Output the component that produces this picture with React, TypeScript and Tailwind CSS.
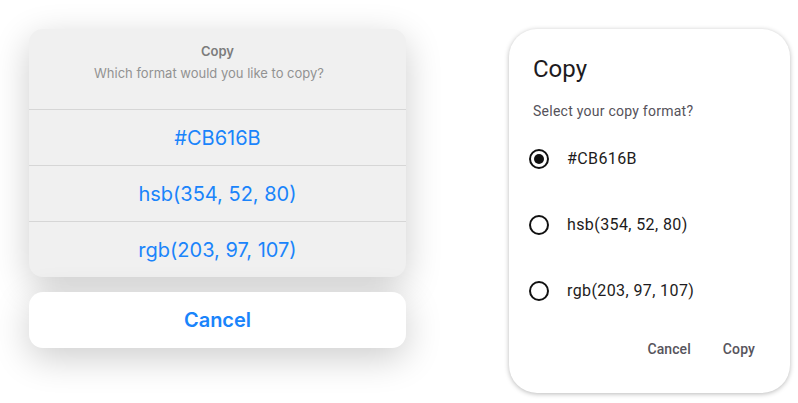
const formats = ['#CB616B', 'hsb(354, 52, 80)', 'rgb(203, 97, 107)']

function IosSheet() {
  return (
    <div className="flex w-[377px] flex-col gap-[15px] font-['Inter',sans-serif]">
      <div className="flex flex-col overflow-hidden rounded-[14px] bg-[#f0f0f0] shadow-[0_10px_36px_rgba(0,0,0,0.2)]">
        <div className="flex h-[80px] flex-col items-center pt-[13px]">
          <div className="text-[13px] font-semibold leading-[18px] text-[#7c7c7c]">Copy</div>
          <div className="mr-[17px] mt-[4px] text-[13px] leading-[18px] text-[#929292]">Which format would you like to copy?</div>
        </div>
        {formats.map((f) => (
          <div
            key={f}
            className="flex h-[56px] items-center justify-center border-t border-[#d6d6d6] text-[20px] text-[#1a84fb]"
          >
            {f}
          </div>
        ))}
      </div>
      <div className="flex h-[56px] items-center justify-center rounded-[14px] bg-white text-[20px] font-semibold text-[#1a84fb] shadow-[0_10px_36px_rgba(0,0,0,0.2)]">
        Cancel
      </div>
    </div>
  )
}

function Radio({ checked }: { checked: boolean }) {
  return (
    <div className="flex h-[20px] w-[20px] items-center justify-center rounded-full border-2 border-[#111]">
      {checked && <div className="h-[10px] w-[10px] rounded-full bg-[#111]" />}
    </div>
  )
}

function MaterialDialog() {
  return (
    <div className="flex h-[364px] w-[281px] flex-col rounded-[28px] bg-white px-6 pt-6 font-['Roboto',sans-serif] shadow-[0_1px_5px_rgba(0,0,0,0.28)]">
      <div className="text-[24px] leading-[32px] text-[#1d1b20]">Copy</div>
      <div className="mt-4 text-[14px] leading-[20px] tracking-[0.25px] text-[#55525a]">Select your copy format?</div>
      <div className="mt-[5px] flex flex-col">
        {formats.map((f, i) => (
          <div key={f} className="ml-[-4px] flex h-[66px] items-center gap-[18px]">
            <Radio checked={i === 0} />
            <span className="text-[16px] tracking-[0.4px] text-[#1d1b20]">{f}</span>
          </div>
        ))}
      </div>
      <div className="mt-[5px] flex justify-end gap-2">
        <div className="flex h-10 items-center px-3 text-[14px] font-medium tracking-[0.1px] text-[#57545c]">Cancel</div>
        <div className="mr-[-1px] flex h-10 items-center px-3 text-[14px] font-medium tracking-[0.1px] text-[#57545c]">Copy</div>
      </div>
    </div>
  )
}

export default function App() {
  return (
    <div className="flex h-[403px] w-[798px] items-start gap-[103px] bg-white pl-[29px] pt-[29px]">
      <IosSheet />
      <MaterialDialog />
    </div>
  )
}
